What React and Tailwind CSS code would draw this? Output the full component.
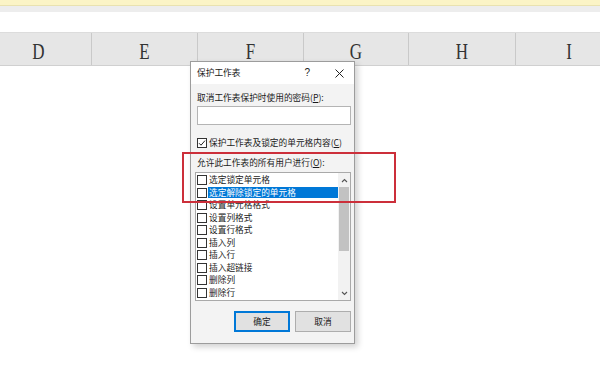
import React from "react";

const cjk = { fontFamily: '"Noto Sans CJK SC", "Noto Sans", sans-serif' };

const columns = ["D", "E", "F", "G", "H", "I"];

const items = [
  "选定锁定单元格",
  "选定解除锁定的单元格",
  "设置单元格格式",
  "设置列格式",
  "设置行格式",
  "插入列",
  "插入行",
  "插入超链接",
  "删除列",
  "删除行",
];

function Box({ checked }) {
  return (
    <span className="w-[10px] h-[10px] shrink-0 border border-[#333] bg-white flex items-center justify-center">
      {checked && (
        <svg width="8" height="8" viewBox="0 0 8 8">
          <path d="M1 4.2 L3 6.2 L7 1.6" fill="none" stroke="#222" strokeWidth="1" />
        </svg>
      )}
    </span>
  );
}

function Chevron({ up }) {
  return (
    <svg width="7" height="5" viewBox="0 0 7 5">
      <path
        d={up ? "M1 4 L3.5 1.5 L6 4" : "M1 1 L3.5 3.5 L6 1"}
        fill="none"
        stroke="#555"
        strokeWidth="1.1"
      />
    </svg>
  );
}

export default function App() {
  return (
    <div className="relative w-[600px] h-[373px] overflow-hidden bg-white" style={cjk}>
      {/* top ribbon edge */}
      <div className="h-[6px] bg-[#fbf4c6] border-b border-[#e9e2b0]" />
      <div className="h-[6px] bg-[#ededed]" />
      <div className="h-[21px] bg-white border-b border-[#dcdcdc]" />

      {/* column header */}
      <div className="h-[33px] bg-[#e6e6e6] border-b border-[#d0d0d0] overflow-hidden">
        <div className="-ml-[14px] grid grid-cols-[106px_106px_106px_105px_107px_106px] h-full">
          {columns.map((c, i) => (
            <div
              key={c}
              className={
                "flex items-center justify-center pt-[4px] " +
                (i < columns.length - 1 ? "border-r border-[#c9c9c9]" : "")
              }
            >
              <span
                className="text-[17px] text-[#333] scale-y-[1.3] leading-none"
                style={{ fontFamily: '"Liberation Serif", serif' }}
              >
                {c}
              </span>
            </div>
          ))}
        </div>
      </div>

      {/* dialog */}
      <div className="absolute left-[190px] top-[61px] w-[165px] border border-[#9c9c9c] bg-[#f3f3f3] shadow-[3px_3px_6px_rgba(0,0,0,0.18)] text-[8.7px] text-[#1a1a1a] leading-[12px]">
        <div className="h-[22px] bg-white flex items-center pl-[6px] pr-[10px]">
          <span className="flex-1">保护工作表</span>
          <span className="text-[10px]" style={{ fontFamily: '"Liberation Sans", sans-serif' }}>?</span>
          <span className="ml-[25px] flex">
            <svg width="9" height="9" viewBox="0 0 9 9">
              <path d="M0.5 0.5 L8.5 8.5 M8.5 0.5 L0.5 8.5" stroke="#222" strokeWidth="1" />
            </svg>
          </span>
        </div>

        <div className="pl-[6px] pr-[3px] pb-[11px]">
          <div className="mt-[8px]">
            取消工作表保护时使用的密码(<span className="underline">P</span>):
          </div>
          <div className="mt-[2px] h-[19px] bg-white border border-[#b4b4b4]" />

          <div className="mt-[12px] flex items-center gap-[2px]">
            <Box checked />
            <span>
              保护工作表及锁定的单元格内容(<span className="underline">C</span>)
            </span>
          </div>

          <div className="mt-[8px]">
            允许此工作表的所有用户进行(<span className="underline">O</span>):
          </div>

          <div className="mt-[3px] -ml-[2px] w-[156px] h-[129px] bg-white border border-[#a9a9a9] flex">
            <div className="flex-1 pt-[1px] pl-[1px]">
              {items.map((t, i) => (
                <div key={t} className="h-[12.5px] flex items-center gap-[1px]">
                  <Box />
                  <span
                    className={
                      "flex-1 pl-[1px] h-[11px] flex items-center " +
                      (i === 1 ? "bg-[#0078d7] text-white" : "")
                    }
                  >
                    {t}
                  </span>
                </div>
              ))}
            </div>
            <div className="w-[12px] flex flex-col items-center bg-[#f2f2f2]">
              <div className="h-[14px] flex items-center">
                <Chevron up />
              </div>
              <div className="w-[10px] h-[64px] bg-[#c2c2c2]" />
              <div className="flex-1" />
              <div className="h-[14px] flex items-center">
                <Chevron />
              </div>
            </div>
          </div>

          <div className="mt-[10px] flex justify-end gap-[5px]">
            <div className="w-[56px] h-[21px] bg-[#e1e1e1] border-2 border-[#0078d7] flex items-center justify-center">
              确定
            </div>
            <div className="w-[56px] h-[21px] bg-[#e1e1e1] border border-[#adadad] flex items-center justify-center">
              取消
            </div>
          </div>
        </div>
      </div>

      {/* annotation box */}
      <div className="absolute left-[182px] top-[152px] w-[214px] h-[51px] border-2 border-[#cc2f3a]" />
    </div>
  );
}
